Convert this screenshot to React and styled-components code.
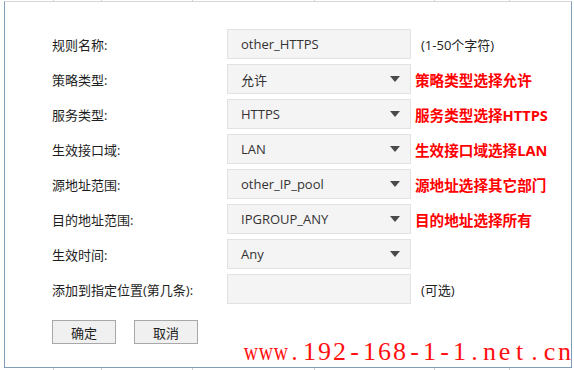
import React from 'react';
import styled, { createGlobalStyle } from 'styled-components';

const Global = createGlobalStyle`
  html, body { margin: 0; padding: 0; background: #fff; }
  body {
    font-family: "Open Sans", "Noto Sans CJK SC", sans-serif;
    font-size: 13px;
    color: #222;
  }
`;

const Page = styled.div`
  width: 574px;
  height: 370px;
  position: relative;
  overflow: hidden;
  background: #fff;
`;

const Ruler = styled.div`
  display: flex;
  height: ${(p) => p.$h}px;
  margin-left: 4px;
  width: 568px;
`;

const Cell = styled.div`
  width: ${(p) => p.$w}px;
  flex: none;
  box-sizing: border-box;
  border-right: 1px solid ${(p) => (p.$last ? 'transparent' : '#cfcfcf')};
`;

const Frame = styled.div`
  box-sizing: border-box;
  margin-left: 4px;
  width: 568px;
  height: 367px;
  border-left: 1px solid #7f9db9;
  border-right: 1px solid #7f9db9;
  border-top: 1px solid #d6d6d6;
  border-bottom: 1px solid #7f9db9;
  padding: 27px 0 0 47px;
`;

const Form = styled.div`
  display: flex;
  flex-direction: column;
  gap: 5px;
`;

const Row = styled.div`
  display: grid;
  grid-template-columns: 175px 184px 1fr;
  align-items: center;
  height: 30px;
`;

const Label = styled.div`
  color: #1e1e1e;
  font-size: 13px;
  white-space: nowrap;
`;

const Box = styled.div`
  box-sizing: border-box;
  height: 30px;
  border: 1px solid #e2e2e2;
  background: #f4f4f4;
  display: flex;
  align-items: center;
  justify-content: space-between;
  padding: 0 10px 0 13px;
  color: #333;
  font-size: 13px;
`;

const Arrow = styled.span`
  width: 0;
  height: 0;
  border-left: 5px solid transparent;
  border-right: 5px solid transparent;
  border-top: 6px solid #4a4a4a;
`;

const Note = styled.div`
  margin-left: 4px;
  white-space: nowrap;
  font-size: ${(p) => (p.$red ? '14.6px' : '13px')};
  font-weight: ${(p) => (p.$red ? 700 : 400)};
  color: ${(p) => (p.$red ? '#ff0000' : '#222')};
  padding-left: ${(p) => (p.$red ? 0 : 6)}px;
`;

const Buttons = styled.div`
  display: flex;
  gap: 18px;
  margin-top: 16px;
`;

const Button = styled.button`
  box-sizing: border-box;
  width: 64px;
  height: 24px;
  border: 1px solid #a8a8a8;
  background: #f0f0f0;
  font-family: "Open Sans", "Noto Sans CJK SC", sans-serif;
  font-size: 13px;
  color: #1e1e1e;
  padding: 0;
`;

const Watermark = styled.div`
  position: absolute;
  left: 242px;
  top: 339px;
  display: flex;
  font-family: "Liberation Serif", "DejaVu Serif", serif;
  font-size: 26px;
  line-height: 26px;
  color: #ff1010;
`;

const WChar = styled.span`
  display: inline-block;
  width: 15px;
  text-align: center;
  transform: ${(p) => (p.$wide ? 'scaleX(0.76)' : 'none')};
`;

const rows = [
  { label: '规则名称:', value: 'other_HTTPS', select: false, note: '(1-50个字符)' },
  { label: '策略类型:', value: '允许', select: true, red: '策略类型选择允许' },
  { label: '服务类型:', value: 'HTTPS', select: true, red: '服务类型选择HTTPS' },
  { label: '生效接口域:', value: 'LAN', select: true, red: '生效接口域选择LAN' },
  { label: '源地址范围:', value: 'other_IP_pool', select: true, red: '源地址选择其它部门' },
  { label: '目的地址范围:', value: 'IPGROUP_ANY', select: true, red: '目的地址选择所有' },
  { label: '生效时间:', value: 'Any', select: true },
  { label: '添加到指定位置(第几条):', value: '', select: false, note: '(可选)' },
];

const ticks = [50, 48, 91, 122, 120, 75, 62];

export default function App() {
  const wm = 'www.192-168-1-1.net.cn';
  return (
    <Page>
      <Global />
      <Ruler $h={1}>
        {ticks.map((w, i) => (
          <Cell key={i} $w={w} $last={i === ticks.length - 1} />
        ))}
      </Ruler>
      <Frame>
        <Form>
          {rows.map((r) => (
            <Row key={r.label}>
              <Label>{r.label}</Label>
              <Box>
                <span>{r.value}</span>
                {r.select && <Arrow />}
              </Box>
              {r.red ? <Note $red>{r.red}</Note> : r.note ? <Note>{r.note}</Note> : <span />}
            </Row>
          ))}
        </Form>
        <Buttons>
          <Button>确定</Button>
          <Button>取消</Button>
        </Buttons>
      </Frame>
      <Ruler $h={2}>
        {ticks.map((w, i) => (
          <Cell key={i} $w={w} $last={i === ticks.length - 1} />
        ))}
      </Ruler>
      <Watermark>
        {wm.split('').map((c, i) => (
          <WChar key={i} $wide={c === 'w'}>{c}</WChar>
        ))}
      </Watermark>
    </Page>
  );
}
